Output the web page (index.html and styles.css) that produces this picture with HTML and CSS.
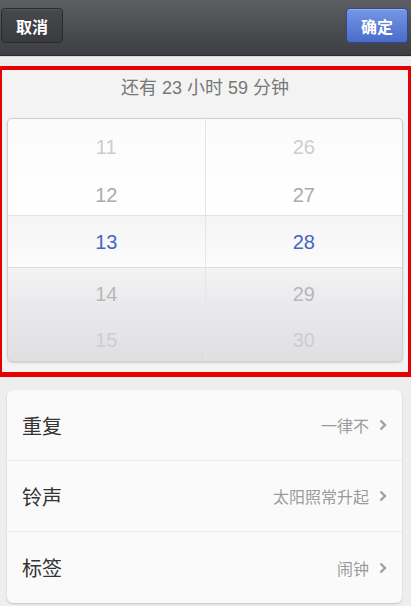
FILE: index.html
```html
<!DOCTYPE html>
<html lang="zh">
<head>
    <meta charset="UTF-8">
    <meta name="viewport" content="width=device-width, initial-scale=1.0">
    <title>闹钟</title>
    <link rel="stylesheet" href="styles.css">
</head>
<body>

    <div class="topbar">
        <div class="btn btn-cancel">取消</div>
        <div class="btn btn-ok">确定</div>
    </div>

    <div class="time-section">
        <div class="remain">还有 23 小时 59 分钟</div>
        <div class="picker">
            <div class="col">
                <div class="cell r1 far">11</div>
                <div class="cell r2 near">12</div>
                <div class="cell r3 current">13</div>
                <div class="cell r4 near">14</div>
                <div class="cell r5 far">15</div>
            </div>
            <div class="col">
                <div class="cell r1 far">26</div>
                <div class="cell r2 near">27</div>
                <div class="cell r3 current">28</div>
                <div class="cell r4 near">29</div>
                <div class="cell r5 far">30</div>
            </div>
        </div>
    </div>

    <div class="settings">
        <div class="row">
            <span class="label">重复</span>
            <span class="value">一律不</span>
            <svg class="arrow" width="8" height="12" viewBox="0 0 8 12"><polyline points="1.5,1.5 6,6 1.5,10.5" /></svg>
        </div>
        <div class="row">
            <span class="label">铃声</span>
            <span class="value">太阳照常升起</span>
            <svg class="arrow" width="8" height="12" viewBox="0 0 8 12"><polyline points="1.5,1.5 6,6 1.5,10.5" /></svg>
        </div>
        <div class="row">
            <span class="label">标签</span>
            <span class="value">闹钟</span>
            <svg class="arrow" width="8" height="12" viewBox="0 0 8 12"><polyline points="1.5,1.5 6,6 1.5,10.5" /></svg>
        </div>
    </div>

</body>
</html>
```

FILE: styles.css
```css
/* page */
body {
    margin: 0;
    padding: 0;
    background-color: #eeeeef;
    font-family: "Liberation Sans", "Noto Sans CJK SC", sans-serif;
    width: 411px;
    height: 606px;
    overflow: hidden;
}

/* top bar */
.topbar {
    height: 56px;
    box-sizing: border-box;
    padding: 8px 3px 0 1px;
    display: flex;
    justify-content: space-between;
    align-items: flex-start;
    background: linear-gradient(#5d5e62, #3d3e41);
    border-bottom: 1px solid #2c2c2e;
    box-shadow: 0 1px 0 #d8d8da;
}

.btn {
    width: 62px;
    height: 35px;
    box-sizing: border-box;
    border-radius: 4px;
    color: #fff;
    font-size: 16px;
    font-weight: bold;
    display: flex;
    align-items: center;
    justify-content: center;
    font-family: "Noto Sans CJK SC", sans-serif;
}

.btn-cancel {
    background: linear-gradient(#47484b, #3a3b3e);
    border: 1px solid #2a2a2c;
    box-shadow: inset 0 1px 0 rgba(255, 255, 255, 0.08);
}

.btn-ok {
    background: linear-gradient(#7497e6, #4a6ccb);
    border: 1px solid #34488f;
    box-shadow: inset 0 1px 0 rgba(255, 255, 255, 0.25);
}

/* time section (highlighted) */
.time-section {
    margin-top: 10px;
    border-style: solid;
    border-color: #e60000;
    border-width: 4px 3px 5px 2px;
    padding: 0 5px 10px 5px;
    background-color: #f3f3f4;
}

.remain {
    height: 36px;
    line-height: 36px;
    text-align: center;
    color: #777;
    font-size: 18px;
    margin-bottom: 12px;
}

.picker {
    height: 244px;
    display: flex;
    border-radius: 5px;
    border: 1px solid #cfcfd2;
    box-sizing: border-box;
    background: linear-gradient(#fbfbfb, #ffffff 40%, #ebebed 75%, #dfdfe2);
    box-shadow: 0 1px 2px rgba(0, 0, 0, 0.15);
    overflow: hidden;
}

.col {
    flex: 1;
    display: flex;
    flex-direction: column;
}

.col + .col {
    border-left: 1px solid #e6e6e8;
}

.cell {
    display: flex;
    align-items: center;
    justify-content: center;
    font-size: 20px;
    box-sizing: border-box;
    padding-top: 3px;
}

.r1 { height: 53px; }
.r2 { height: 43px; }
.r3 { height: 53px; padding-top: 1px; }
.r4 { height: 49px; }
.r5 { height: 44px; }

.far { color: #cdcdcf; }
.near { color: #ababad; }

.current {
    color: #4466c0;
    background: linear-gradient(#f4f4f5, #fcfcfc);
    border-top: 1px solid #e2e2e4;
    border-bottom: 1px solid #dcdcde;
}

.r4.near { color: #b7b7b9; }

/* settings list */
.settings {
    margin: 13px 9px 0 7px;
    background-color: #fafafa;
    border-radius: 6px;
    box-shadow: 0 1px 2px rgba(0, 0, 0, 0.18);
}

.row {
    height: 70px;
    display: flex;
    align-items: center;
    padding: 0 15px 0 15px;
    font-family: "Noto Sans CJK SC", sans-serif;
}

.row + .row {
    border-top: 1px solid #ececec;
}

.row:last-child {
    height: 71px;
}

.label {
    flex: 1;
    font-size: 20px;
    color: #333;
}

.value {
    font-size: 16px;
    color: #9a9a9a;
}

.arrow {
    margin-left: 10px;
    fill: none;
    stroke: #a0a0a0;
    stroke-width: 2.4;
}
```
